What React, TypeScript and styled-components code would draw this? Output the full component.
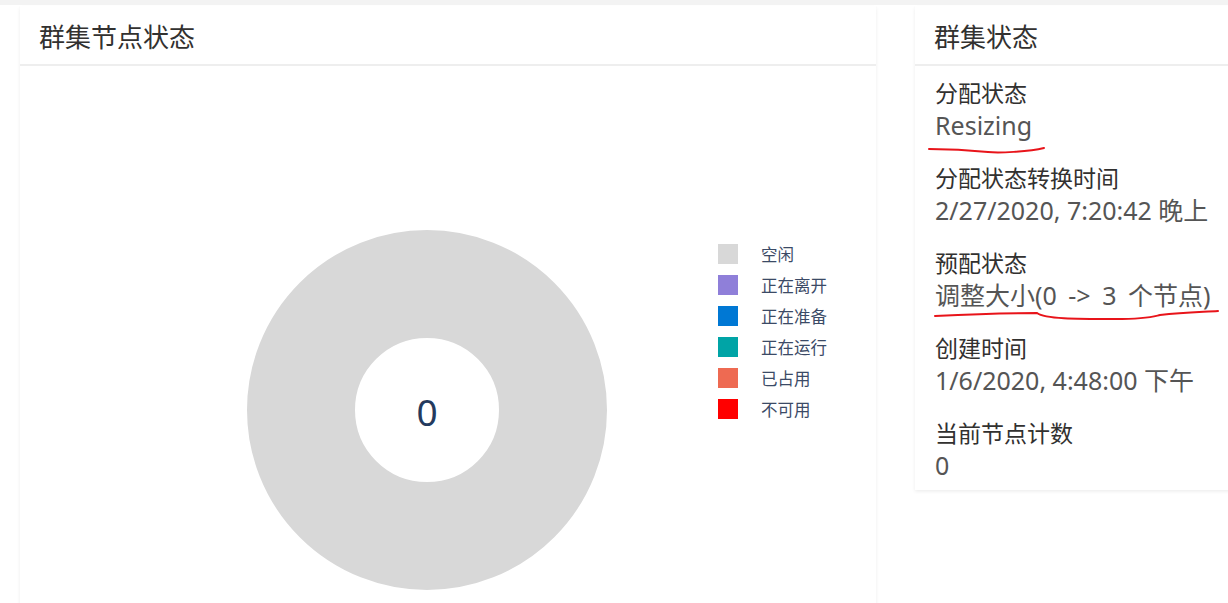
import React from 'react';
import styled, { createGlobalStyle } from 'styled-components';

const GlobalStyle = createGlobalStyle`
  html, body {
    margin: 0;
    padding: 0;
    background: #ffffff;
    font-family: "Segoe UI", "Noto Sans", "Noto Sans CJK SC", sans-serif;
    overflow: hidden;
  }
`

const Page = styled.div`
  width: 1228px;
  height: 603px;
  background: #fff;
  border-top: 5px solid #f3f3f3;
  box-sizing: border-box;
  display: flex;
  align-items: flex-start;
  padding-left: 20px;
  gap: 39px;
  overflow: hidden;
`

const Card = styled.div<{ $width: number; $height: number }>`
  width: ${p => p.$width}px;
  height: ${p => p.$height}px;
  flex-shrink: 0;
  margin-top: 1px;
  background: #fff;
  box-shadow: 0 1.6px 3.6px rgba(0, 0, 0, 0.08), 0 0.3px 0.9px rgba(0, 0, 0, 0.06);
  display: flex;
  flex-direction: column;
  position: relative;
  overflow: hidden;
`

const CardHeader = styled.div`
  height: 60px;
  flex-shrink: 0;
  box-sizing: border-box;
  padding: 15px 0 0 19px;
  border-bottom: 2px solid #eeeeee;
  font-size: 26px;
  line-height: 32px;
  color: #323130;
`

const ChartBody = styled.div`
  flex: 1;
  display: flex;
  align-items: flex-start;
`

const DonutWrap = styled.div`
  margin: 164px 0 0 227px;
  width: 360px;
  height: 360px;
  position: relative;
  flex-shrink: 0;
`

const DonutValue = styled.div`
  position: absolute;
  inset: 0;
  display: flex;
  align-items: center;
  justify-content: center;
  font-size: 37px;
  color: #243a5e;
  padding-top: 2px;
`

const Legend = styled.ul`
  list-style: none;
  margin: 178px 0 0 111px;
  padding: 0;
  display: flex;
  flex-direction: column;
  gap: 11px;
`

const LegendItem = styled.li`
  display: flex;
  align-items: center;
  height: 20px;
  font-size: 16.5px;
  color: #3b4a66;
`

const Swatch = styled.span<{ $color: string }>`
  width: 20px;
  height: 20px;
  background: ${p => p.$color};
  margin-right: 23px;
`

const StatusList = styled.div`
  padding: 12px 0 0 20px;
  display: flex;
  flex-direction: column;
`

const StatusItem = styled.div`
  height: 85px;
  flex-shrink: 0;
  position: relative;
`

const Label = styled.div`
  font-size: 23px;
  line-height: 30px;
  color: #323130;
  white-space: nowrap;
`

const Value = styled.div<{ $wordSpacing?: number }>`
  font-size: 25px;
  line-height: 34px;
  color: #555;
  white-space: nowrap;
  word-spacing: ${p => p.$wordSpacing ?? 0}px;
`

const Scribble = styled.svg`
  position: absolute;
  pointer-events: none;
  overflow: visible;
`

const legend = [
  { label: '空闲', color: '#d8d8d8' },
  { label: '正在离开', color: '#8f7fd9' },
  { label: '正在准备', color: '#0078d4' },
  { label: '正在运行', color: '#00a4a6' },
  { label: '已占用', color: '#ee6a52' },
  { label: '不可用', color: '#ff0000' },
];

const statuses = [
  { label: '分配状态', value: 'Resizing' },
  { label: '分配状态转换时间', value: '2/27/2020, 7:20:42 晚上' },
  { label: '预配状态', value: '调整大小(0 -> 3 个节点)', wordSpacing: 5 },
  { label: '创建时间', value: '1/6/2020, 4:48:00 下午' },
  { label: '当前节点计数', value: '0' },
];

export default function App() {
  return (
    <>
      <GlobalStyle />
      <Page>
        <Card $width={856} $height={620}>
          <CardHeader>群集节点状态</CardHeader>
          <ChartBody>
            <DonutWrap>
              <svg width="360" height="360" viewBox="0 0 360 360">
                <circle cx="180" cy="180" r="126" fill="none" stroke="#d8d8d8" strokeWidth="108" />
              </svg>
              <DonutValue>0</DonutValue>
            </DonutWrap>
            <Legend>
              {legend.map(item => (
                <LegendItem key={item.label}>
                  <Swatch $color={item.color} />
                  {item.label}
                </LegendItem>
              ))}
            </Legend>
          </ChartBody>
        </Card>
        <Card $width={330} $height={484}>
          <CardHeader>群集状态</CardHeader>
          <StatusList>
            {statuses.map((s, i) => (
              <StatusItem key={s.label}>
                <Label>{s.label}</Label>
                <Value $wordSpacing={s.wordSpacing}>{s.value}</Value>
                {i === 0 && (
                  <Scribble width="118" height="10" style={{ top: 66, left: -7 }}>
                    <path d="M1 5 C 30 5, 50 7, 60 8 S 100 8, 116 4" stroke="#e8141a" strokeWidth="2" fill="none" strokeLinecap="round" />
                  </Scribble>
                )}
                {i === 2 && (
                  <Scribble width="290" height="14" style={{ top: 60, left: 0 }}>
                    <path d="M0 8 C 40 6, 80 5, 102 5 C 110 11, 140 11, 180 11 C 215 11, 220 8, 225 7 C 250 4, 270 4, 283 3" stroke="#e8141a" strokeWidth="2" fill="none" strokeLinecap="round" />
                  </Scribble>
                )}
              </StatusItem>
            ))}
          </StatusList>
        </Card>
      </Page>
    </>
  );
}
